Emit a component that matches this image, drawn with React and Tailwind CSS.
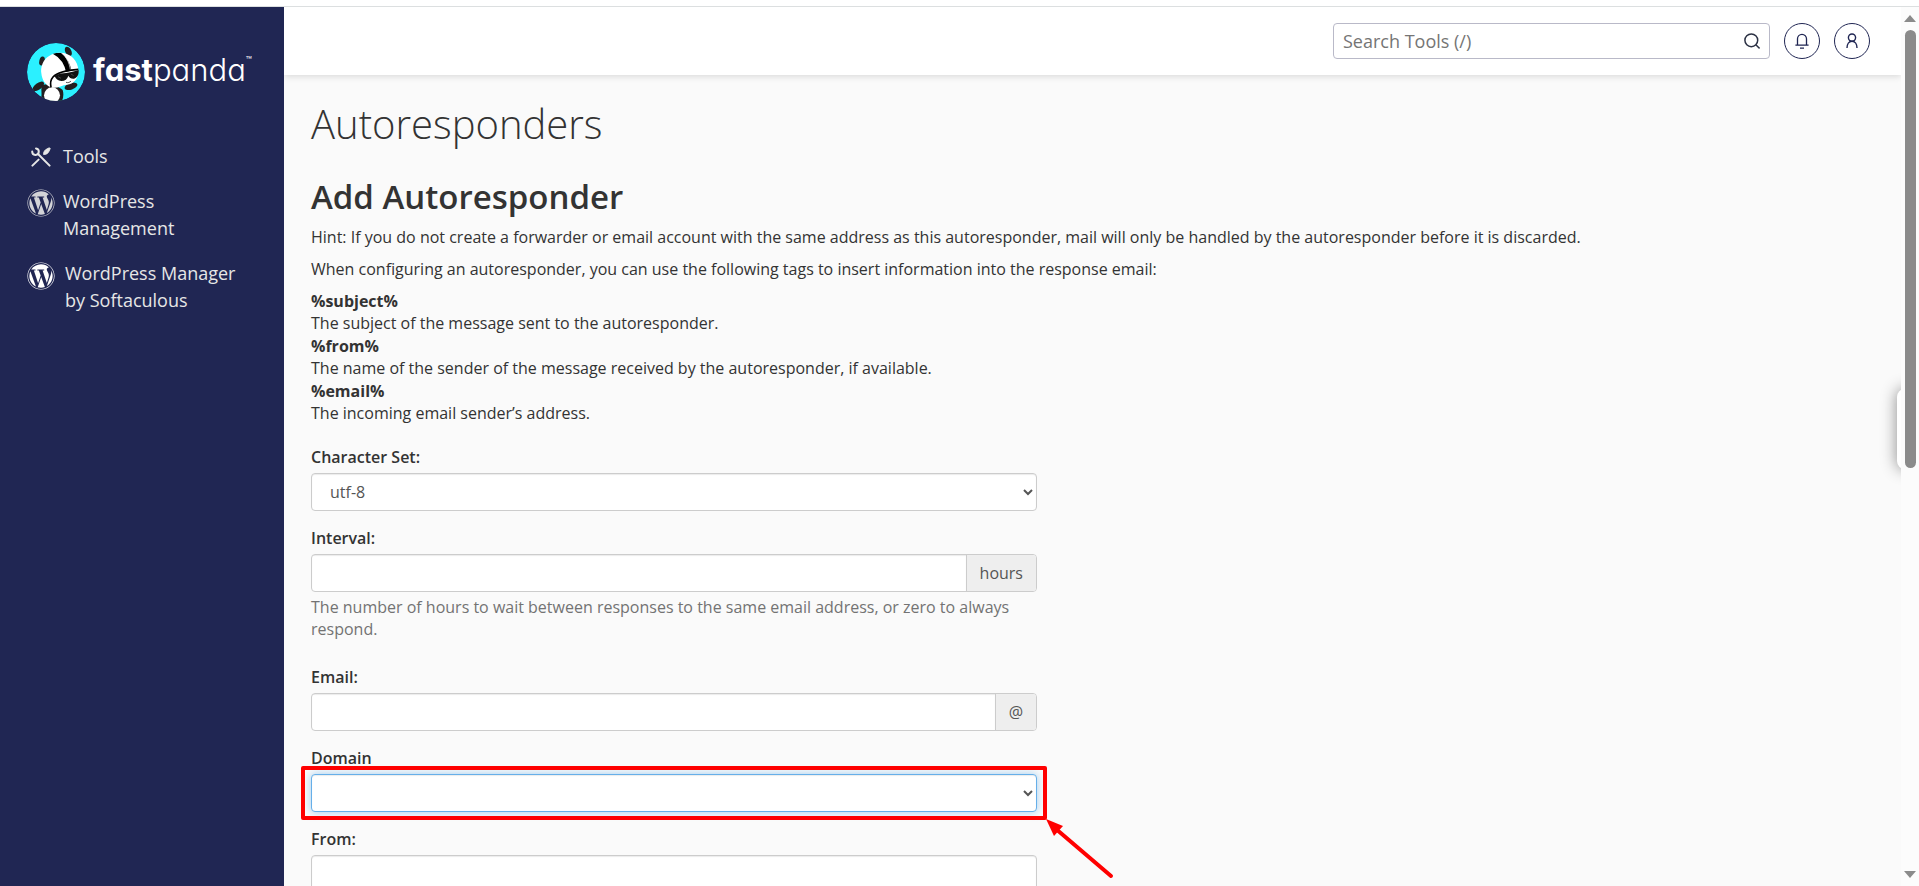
import { useState } from 'react';
import { FaWordpress } from 'react-icons/fa';

const NAV_ITEMS = [
  { label: 'Tools', icon: ToolsIcon, gap: 'gap-2', iconClass: 'w-5 h-5 mt-1' },
  { label: 'WordPress Management', icon: FaWordpress, gap: 'gap-2', iconClass: 'w-7 h-7 mt-px opacity-90' },
  { label: 'WordPress Manager by Softaculous', icon: FaWordpress, gap: 'gap-[10px]', iconClass: 'w-7 h-7 mt-0.5 text-white' },
];

const TAGS = [
  { tag: '%subject%', description: 'The subject of the message sent to the autoresponder.' },
  { tag: '%from%', description: 'The name of the sender of the message received by the autoresponder, if available.' },
  { tag: '%email%', description: 'The incoming email sender’s address.' },
];

const CONTROL = 'block w-full h-[38px] px-[14px] bg-white text-[#555] border border-[#ccc] rounded shadow-[inset_0_1px_1px_rgba(0,0,0,0.08)] outline-none';

function PandaLogo() {
  return (
    <svg viewBox="9 7 174 174" className="w-[58px] h-[58px] shrink-0" aria-hidden="true">
      <defs>
        <clipPath id="badge"><circle cx="96" cy="94" r="87" /></clipPath>
        <clipPath id="helmet"><path d="M52 98C48 62 74 36 108 36c32 0 54 22 55 50-25 6-62 10-76 24-7 8-9 18-6 30-16-5-27-22-29-42z" /></clipPath>
      </defs>
      <g clipPath="url(#badge)">
        <circle cx="96" cy="94" r="87" fill="#2bf0ff" />
        {/* ears */}
        <ellipse cx="54" cy="61" rx="8" ry="14" transform="rotate(12 54 61)" fill="#231f20" />
        <ellipse cx="133" cy="32" rx="9" ry="15" transform="rotate(-28 133 32)" fill="#231f20" />
        {/* arms */}
        <ellipse cx="43" cy="137" rx="20" ry="10" transform="rotate(-36 43 137)" fill="#231f20" />
        <ellipse cx="141" cy="137" rx="20" ry="10" transform="rotate(-18 141 137)" fill="#231f20" />
        {/* body */}
        <path d="M54 134c20-8 46 0 62 14 4 12 2 26-4 38H46c-2-8 4-10 6-18 2-12-2-22 2-34z" fill="#231f20" />
        <ellipse cx="84" cy="164" rx="24" ry="24" fill="#fff" />
        {/* head */}
        <path d="M52 98C48 62 74 36 108 36c32 0 55 24 55 54 0 24-14 40-34 42-16 1-32 14-48 8-16-5-27-22-29-42z" fill="#fff" />
        <g clipPath="url(#helmet)">
          <path d="M90 32c24 12 40 34 46 66" fill="none" stroke="#000" strokeWidth="17" />
          <path d="M100 28c24 14 36 34 40 64" fill="none" stroke="#fff" strokeWidth="2" />
        </g>
        <path d="M163 86c-30 2-62 8-76 23-7 8-9 18-6 31" fill="none" stroke="#000" strokeWidth="5" />
        {/* sunglasses */}
        <path d="M92 106c12-7 24-9 35-9 13-2 25-5 37-9 1 14-4 23-14 26-8 1-14-3-17-9-3 10-10 16-21 16-10-1-17-6-20-15z" fill="#111" />
        <path d="M102 108l9 5M141 100l8 5" stroke="#444" strokeWidth="3" />
        <path d="M126 125c6 2 12 0 15-4" fill="none" stroke="#000" strokeWidth="2" />
      </g>
    </svg>
  );
}

function ToolsIcon({ className }) {
  return (
    <svg viewBox="0 0 20 20" className={className} fill="none" stroke="currentColor" strokeLinecap="round" aria-hidden="true">
      <path d="M5 1.4A3.3 3.3 0 1 1 1.2 4.6" strokeWidth="2" />
      <path d="M6.8 6.8L18.6 18.6" strokeWidth="2" />
      <path d="M1.4 18.6L7.6 12.6" strokeWidth="2" />
      <path d="M12.8 7.2c-.6-1.6.6-3.4 2-4.6L18.4.8l.8.8-1.8 3.8c-1.2 1.4-3 2.4-4.6 1.8z" fill="currentColor" strokeWidth="1" />
    </svg>
  );
}

function SearchIcon() {
  return (
    <svg viewBox="0 0 16 16" className="w-4 h-4" fill="none" stroke="currentColor" strokeWidth="1.5" aria-hidden="true">
      <circle cx="7.3" cy="7.3" r="6.4" />
      <path d="M11.8 11.8L15.6 15.4" />
    </svg>
  );
}

function BellIcon() {
  return (
    <svg viewBox="0 0 16 16" className="w-4 h-4" fill="none" stroke="currentColor" strokeWidth="1.3" aria-hidden="true">
      <path d="M3.5 12V5.8a4.5 4.5 0 0 1 9 0V12" />
      <path d="M1.4 12.1h13.2M6 15.1h4" />
    </svg>
  );
}

function UserIcon() {
  return (
    <svg viewBox="0 0 16 16" className="w-4 h-4" fill="none" stroke="currentColor" strokeWidth="1.4" aria-hidden="true">
      <circle cx="8" cy="4.6" r="3.6" />
      <path d="M3 15c0-4 2-6.8 5-6.8s5 2.8 5 6.8" />
    </svg>
  );
}

function Field({ id, label, children }) {
  return (
    <div className="mb-[15px]">
      <label htmlFor={id} className="block pt-px mb-1 leading-[23px] font-semibold">{label}</label>
      {children}
    </div>
  );
}

function AddonInput({ id, addon, value, onChange }) {
  return (
    <div className="flex h-[38px] bg-white border border-[#ccc] rounded overflow-hidden">
      <input
        id={id}
        value={value}
        onChange={onChange}
        className="flex-1 min-w-0 px-[14px] text-[#555] shadow-[inset_0_1px_1px_rgba(0,0,0,0.08)] outline-none"
      />
      <span className="flex items-center px-[13px] bg-[#eee] text-[#555] border-l border-[#ccc]">{addon}</span>
    </div>
  );
}

export default function App() {
  const [form, setForm] = useState({ charset: 'utf-8', interval: '', email: '', domain: '', from: '' });
  const [search, setSearch] = useState('');

  const update = (key) => (e) => setForm(prev => ({ ...prev, [key]: e.target.value }));

  return (
    <div className="h-screen flex flex-col overflow-hidden bg-white font-['Open_Sans',sans-serif] text-base text-[#333]">
      <div className="h-[7px] shrink-0 border-b border-[#dcdfe0]" />

      <div className="flex flex-1 min-h-0">
        {/* Sidebar */}
        <aside className="w-[284px] shrink-0 bg-[#202653] text-[#e6e6e6] pt-9 pl-[27px] pr-7">
          <a href="#home" className="flex items-center gap-2 text-white">
            <PandaLogo />
            <span className="flex items-start pb-1 font-['Inter',sans-serif] [font-feature-settings:'cv11'] text-[31px] leading-10">
              <span className="font-bold">fast</span>
              <span className="font-light">panda</span>
              <span className="text-[10px] leading-5">™</span>
            </span>
          </a>
          <nav className="mt-[42px] flex flex-col gap-[18px]">
            {NAV_ITEMS.map(({ label, icon: Icon, gap, iconClass }) => (
              <a key={label} href="#nav" className={`flex items-start text-lg leading-[27px] ${gap}`}>
                <span className="w-7 shrink-0 flex justify-center">
                  <Icon className={iconClass} />
                </span>
                <span>{label}</span>
              </a>
            ))}
          </nav>
        </aside>

        <div className="relative flex-1 min-w-0 flex flex-col bg-[#fafafa] overflow-hidden">
          {/* Header */}
          <header className="h-[68px] shrink-0 bg-white flex items-center justify-end gap-[14px] pr-[31px] shadow-[0_2px_6px_rgba(0,0,0,0.12)]">
            <div className="flex items-center w-[437px] h-9 px-[9px] border border-[#b9b9c8] rounded">
              <input
                value={search}
                onChange={e => setSearch(e.target.value)}
                placeholder="Search Tools (/)"
                aria-label="Search Tools"
                className="flex-1 min-w-0 text-lg placeholder:text-[#757575] outline-none"
              />
              <button type="button" aria-label="Search" className="text-[#2b3144]">
                <SearchIcon />
              </button>
            </div>
            <button type="button" aria-label="Notifications" className="w-9 h-9 flex items-center justify-center rounded-full border border-[#202653] text-[#202653]">
              <BellIcon />
            </button>
            <button type="button" aria-label="Account" className="w-9 h-9 flex items-center justify-center rounded-full border border-[#202653] text-[#202653]">
              <UserIcon />
            </button>
          </header>

          <main className="flex-1 min-h-0 overflow-hidden pt-[25px] px-[27px]">
            <h1 className="text-[40px] leading-[48px] font-light">Autoresponders</h1>
            <h2 className="mt-[29px] mb-[9px] text-[33px] leading-10 font-semibold">Add Autoresponder</h2>
            <p className="mb-[10px] leading-[22px]">
              Hint: If you do not create a forwarder or email account with the same address as this autoresponder, mail will only be handled by the autoresponder before it is discarded.
            </p>
            <p className="mb-[10px] leading-[22px]">
              When configuring an autoresponder, you can use the following tags to insert information into the response email:
            </p>
            <dl className="mb-5">
              {TAGS.map(({ tag, description }) => (
                <div key={tag}>
                  <dt className="leading-[22px] font-bold">{tag}</dt>
                  <dd className="leading-[23px]">{description}</dd>
                </div>
              ))}
            </dl>

            <form className="max-w-[726px]">
              <Field id="charset" label="Character Set:">
                <select id="charset" value={form.charset} onChange={update('charset')} className={CONTROL}>
                  <option value="utf-8">utf-8</option>
                </select>
              </Field>

              <Field id="interval" label="Interval:">
                <AddonInput id="interval" addon="hours" value={form.interval} onChange={update('interval')} />
                <p className="mt-1 mb-[25px] leading-[22px] text-[#737373]">
                  The number of hours to wait between responses to the same email address, or zero to always respond.
                </p>
              </Field>

              <Field id="email" label="Email:">
                <AddonInput id="email" addon="@" value={form.email} onChange={update('email')} />
              </Field>

              <Field id="domain" label="Domain">
                <div className="relative">
                  <select
                    id="domain"
                    value={form.domain}
                    onChange={update('domain')}
                    className="block w-full h-[38px] px-[14px] bg-white text-[#555] border border-[#66afe9] rounded shadow-[inset_0_1px_1px_rgba(0,0,0,0.08),0_0_8px_rgba(102,175,233,0.6)] outline-none"
                  >
                    <option value="" />
                  </select>
                  {/* callout */}
                  <div className="absolute -inset-x-[10px] -inset-y-2 border-4 border-[#ff0000] rounded-[2px] pointer-events-none" />
                  <svg viewBox="0 0 70 64" className="absolute left-full top-full ml-2 mt-1.5 w-[70px] h-16 pointer-events-none" aria-hidden="true">
                    <path d="M1 1L18 8L9 18z" fill="#ff0000" />
                    <path d="M11 11L66 58" stroke="#ff0000" strokeWidth="4" strokeLinecap="round" />
                  </svg>
                </div>
              </Field>

              <Field id="from" label="From:">
                <input id="from" value={form.from} onChange={update('from')} className={CONTROL} />
              </Field>
            </form>
          </main>

          {/* Side tab */}
          <div className="absolute -right-4 top-[382px] w-5 h-20 rounded-l-lg bg-white shadow-[0_0_16px_rgba(0,0,0,0.45)]" />
        </div>

        {/* Scrollbar */}
        <div className="w-[18px] shrink-0 bg-[#fcfcfc] flex flex-col items-center pt-2 pb-2">
          <svg viewBox="0 0 12 7" className="w-3 h-[7px]" aria-hidden="true"><path d="M0 7L6 0L12 7z" fill="#8b8b8b" /></svg>
          <div className="flex-1 w-full flex justify-center pt-2">
            <div className="w-[11px] h-[438px] rounded-full bg-[#8b8b8b]" />
          </div>
          <svg viewBox="0 0 12 7" className="w-3 h-[7px]" aria-hidden="true"><path d="M0 0L6 7L12 0z" fill="#8b8b8b" /></svg>
        </div>
      </div>
    </div>
  );
}
